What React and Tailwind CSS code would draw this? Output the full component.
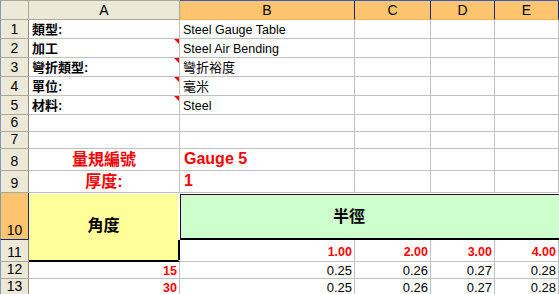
import React from 'react'

// Excel 2003 style sheet: Steel Gauge Table
const COLS = ['A', 'B', 'C', 'D', 'E']

function Corner() {
  return <div className="border-l border-l-[#7f9db9] border-t border-r border-b border-[#aca899] bg-[#ece9d8]" />
}

function ColHead({ label, sel }) {
  return sel ? (
    <div className="flex items-center justify-center border-t border-t-[#3d5fbf] border-r border-r-[#14248a] border-b border-b-[#f2b55a] bg-[#ffc56e] text-[14px] text-black">
      {label}
    </div>
  ) : (
    <div className="flex items-center justify-center border-t border-r border-b border-[#aca899] bg-[#ece9d8] text-[14px] text-black">
      {label}
    </div>
  )
}

function RowHead({ n, sel }) {
  return (
    <div
      className={
        sel
          ? 'flex items-end justify-center pb-[2px] leading-none border-l border-l-[#7f9db9] border-r border-b border-r-[#14248a] border-b-[#14248a] bg-[#ffc56e] text-[14px] text-black'
          : 'flex items-end justify-center pb-[2px] leading-none border-l border-l-[#7f9db9] border-r border-b border-r-[#8f8b7c] border-b-[#aca899] bg-[#ece9d8] text-[14px] text-black'
      }
    >
      {n}
    </div>
  )
}

function Cell({ children, className = '', note }) {
  return (
    <div className={'relative flex items-end overflow-hidden whitespace-nowrap border-r border-b border-[#c0c0c0] px-[3px] leading-none ' + className}>
      {children}
      {note && <span className="absolute right-0 top-0 h-0 w-0 border-l-[5px] border-l-transparent border-t-[5px] border-t-[#ff0000]" />}
    </div>
  )
}

const Blank = () => <Cell />

export default function App() {
  const labels = [
    ['類型:', 'Steel Gauge Table', false],
    ['加工', 'Steel Air Bending', true],
    ['彎折類型:', '彎折裕度', true],
    ['單位:', '毫米', true],
    ['材料:', 'Steel', true],
  ]

  return (
    <div className="h-[294px] w-[559px] overflow-hidden bg-white font-['Liberation_Sans','Noto_Sans_CJK_TC',sans-serif] text-black">
      <div className="grid grid-cols-[29px_151px_175px_76px_64px_64px] grid-rows-[20px_19px_19px_19px_19px_19px_17px_17px_22px_22px_47px_22px_17px_17px]">
        {/* column headers */}
        <Corner />
        {COLS.map((c) => (
          <ColHead key={c} label={c} sel={c !== 'A'} />
        ))}

        {/* rows 1-5: metadata */}
        {labels.map(([k, v, note], i) => (
          <React.Fragment key={i}>
            <RowHead n={i + 1} />
            <Cell note={note} className="pb-[2px] text-[13px] font-bold">{k}</Cell>
            <Cell className={'pb-[2px] ' + (/^[A-Za-z]/.test(v) ? 'text-[12.5px]' : 'text-[13px]')}>{v}</Cell>
            <Blank />
            <Blank />
            <Blank />
          </React.Fragment>
        ))}

        {/* rows 6-7 empty */}
        {[6, 7].map((n) => (
          <React.Fragment key={n}>
            <RowHead n={n} />
            <Blank />
            <Blank />
            <Blank />
            <Blank />
            <Blank />
          </React.Fragment>
        ))}

        {/* row 8 */}
        <RowHead n={8} />
        <Cell className="justify-center pb-[2px] text-[16px] font-bold text-[#ff0000]">量規編號</Cell>
        <Cell className="pb-[3px] pl-[4px] text-[16px] font-bold text-[#ff0000]">Gauge 5</Cell>
        <Blank />
        <Blank />
        <Blank />

        {/* row 9 */}
        <RowHead n={9} />
        <Cell className="justify-center pb-[2px] text-[16px] font-bold text-[#ff0000]">厚度:</Cell>
        <Cell className="pb-[3px] pl-[4px] text-[16px] font-bold text-[#ff0000]">1</Cell>
        <Blank />
        <Blank />
        <Blank />

        {/* row 10 */}
        <RowHead n={10} sel />
        <div className="relative row-span-2 flex items-center justify-center border-t border-t-white border-r-2 border-r-white border-b-2 border-b-black bg-[#ffff99] text-[16px] font-bold leading-none">
          <span className="pb-[2px]">角度</span>
          <span className="absolute -right-[2px] top-[46px] bottom-0 w-[2px] bg-black" />
        </div>
        <div className="col-span-4 flex flex-col border-t border-t-white border-b-2 border-b-black">
          <div className="flex flex-1 items-center border-t border-l border-[#330033] bg-[#ccffcc] pl-[152px] text-[16px] font-bold leading-none">
            半徑
          </div>
        </div>

        {/* row 11 */}
        <RowHead n={11} />
        {['1.00', '2.00', '3.00', '4.00'].map((v) => (
          <Cell key={v} className="justify-end pb-[3px] pr-[2px] text-[12.5px] font-bold text-[#ff0000]">{v}</Cell>
        ))}

        {/* rows 12-13 */}
        {[
          [12, '15'],
          [13, '30'],
        ].map(([n, a]) => (
          <React.Fragment key={n}>
            <RowHead n={n} />
            <Cell className="justify-end pb-[1px] pr-[2px] text-[12.5px] font-bold text-[#ff0000]">{a}</Cell>
            {['0.25', '0.26', '0.27', '0.28'].map((v) => (
              <Cell key={v} className="justify-end pb-[1px] pr-[2px] text-[13px]">{v}</Cell>
            ))}
          </React.Fragment>
        ))}
      </div>
    </div>
  )
}
